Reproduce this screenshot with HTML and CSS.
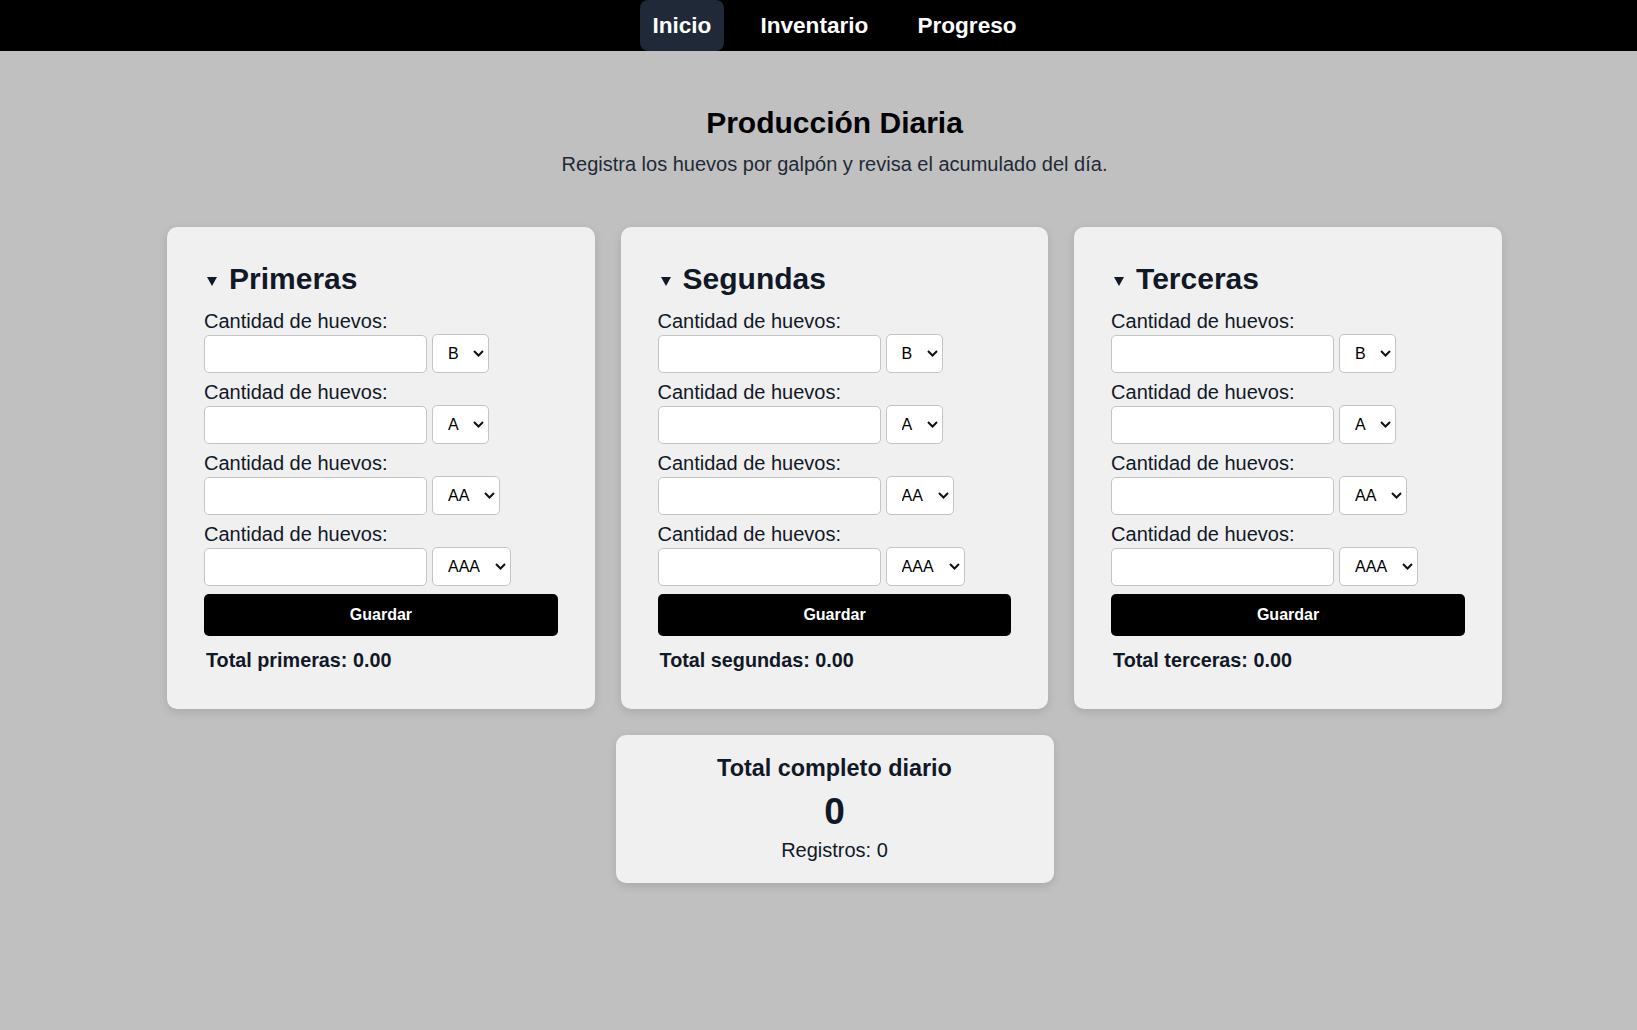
FILE: index.html
```html
<!DOCTYPE html>
<html lang="es">
<head>
<meta charset="utf-8">
<title>Producción Diaria</title>
<link rel="stylesheet" href="styles.css">
</head>
<body>
<nav class="topnav">
  <a class="nav-link active" href="#">Inicio</a>
  <a class="nav-link" href="#">Inventario</a>
  <a class="nav-link" href="#">Progreso</a>
</nav>
<main class="main">
  <header class="page-head">
    <h1 class="page-title">Producción Diaria</h1>
    <p class="page-sub">Registra los huevos por galpón y revisa el acumulado del día.</p>
  </header>
  <section class="cards">
    <div class="card">
      <div class="card-title"><svg class="tri" width="10" height="10" viewBox="0 0 10 10"><polygon points="0,0 10,0 5,9" fill="#111827"/></svg><h2>Primeras</h2></div>
      <div class="row"><label class="lbl">Cantidad de huevos:</label><div class="ctrls"><input class="qty" type="text"><span class="sel-wrap"><select class="sel"><option>B</option></select><svg class="chev" width="11" height="7" viewBox="0 0 11 7"><polyline points="1,1 5.5,5.5 10,1" fill="none" stroke="#111" stroke-width="2"/></svg></span></div></div>
      <div class="row"><label class="lbl">Cantidad de huevos:</label><div class="ctrls"><input class="qty" type="text"><span class="sel-wrap"><select class="sel"><option>A</option></select><svg class="chev" width="11" height="7" viewBox="0 0 11 7"><polyline points="1,1 5.5,5.5 10,1" fill="none" stroke="#111" stroke-width="2"/></svg></span></div></div>
      <div class="row"><label class="lbl">Cantidad de huevos:</label><div class="ctrls"><input class="qty" type="text"><span class="sel-wrap"><select class="sel"><option>AA</option></select><svg class="chev" width="11" height="7" viewBox="0 0 11 7"><polyline points="1,1 5.5,5.5 10,1" fill="none" stroke="#111" stroke-width="2"/></svg></span></div></div>
      <div class="row"><label class="lbl">Cantidad de huevos:</label><div class="ctrls"><input class="qty" type="text"><span class="sel-wrap"><select class="sel"><option>AAA</option></select><svg class="chev" width="11" height="7" viewBox="0 0 11 7"><polyline points="1,1 5.5,5.5 10,1" fill="none" stroke="#111" stroke-width="2"/></svg></span></div></div>
      <button class="save" type="button">Guardar</button>
      <p class="total">Total primeras: 0.00</p>
    </div>
    <div class="card">
      <div class="card-title"><svg class="tri" width="10" height="10" viewBox="0 0 10 10"><polygon points="0,0 10,0 5,9" fill="#111827"/></svg><h2>Segundas</h2></div>
      <div class="row"><label class="lbl">Cantidad de huevos:</label><div class="ctrls"><input class="qty" type="text"><span class="sel-wrap"><select class="sel"><option>B</option></select><svg class="chev" width="11" height="7" viewBox="0 0 11 7"><polyline points="1,1 5.5,5.5 10,1" fill="none" stroke="#111" stroke-width="2"/></svg></span></div></div>
      <div class="row"><label class="lbl">Cantidad de huevos:</label><div class="ctrls"><input class="qty" type="text"><span class="sel-wrap"><select class="sel"><option>A</option></select><svg class="chev" width="11" height="7" viewBox="0 0 11 7"><polyline points="1,1 5.5,5.5 10,1" fill="none" stroke="#111" stroke-width="2"/></svg></span></div></div>
      <div class="row"><label class="lbl">Cantidad de huevos:</label><div class="ctrls"><input class="qty" type="text"><span class="sel-wrap"><select class="sel"><option>AA</option></select><svg class="chev" width="11" height="7" viewBox="0 0 11 7"><polyline points="1,1 5.5,5.5 10,1" fill="none" stroke="#111" stroke-width="2"/></svg></span></div></div>
      <div class="row"><label class="lbl">Cantidad de huevos:</label><div class="ctrls"><input class="qty" type="text"><span class="sel-wrap"><select class="sel"><option>AAA</option></select><svg class="chev" width="11" height="7" viewBox="0 0 11 7"><polyline points="1,1 5.5,5.5 10,1" fill="none" stroke="#111" stroke-width="2"/></svg></span></div></div>
      <button class="save" type="button">Guardar</button>
      <p class="total">Total segundas: 0.00</p>
    </div>
    <div class="card">
      <div class="card-title"><svg class="tri" width="10" height="10" viewBox="0 0 10 10"><polygon points="0,0 10,0 5,9" fill="#111827"/></svg><h2>Terceras</h2></div>
      <div class="row"><label class="lbl">Cantidad de huevos:</label><div class="ctrls"><input class="qty" type="text"><span class="sel-wrap"><select class="sel"><option>B</option></select><svg class="chev" width="11" height="7" viewBox="0 0 11 7"><polyline points="1,1 5.5,5.5 10,1" fill="none" stroke="#111" stroke-width="2"/></svg></span></div></div>
      <div class="row"><label class="lbl">Cantidad de huevos:</label><div class="ctrls"><input class="qty" type="text"><span class="sel-wrap"><select class="sel"><option>A</option></select><svg class="chev" width="11" height="7" viewBox="0 0 11 7"><polyline points="1,1 5.5,5.5 10,1" fill="none" stroke="#111" stroke-width="2"/></svg></span></div></div>
      <div class="row"><label class="lbl">Cantidad de huevos:</label><div class="ctrls"><input class="qty" type="text"><span class="sel-wrap"><select class="sel"><option>AA</option></select><svg class="chev" width="11" height="7" viewBox="0 0 11 7"><polyline points="1,1 5.5,5.5 10,1" fill="none" stroke="#111" stroke-width="2"/></svg></span></div></div>
      <div class="row"><label class="lbl">Cantidad de huevos:</label><div class="ctrls"><input class="qty" type="text"><span class="sel-wrap"><select class="sel"><option>AAA</option></select><svg class="chev" width="11" height="7" viewBox="0 0 11 7"><polyline points="1,1 5.5,5.5 10,1" fill="none" stroke="#111" stroke-width="2"/></svg></span></div></div>
      <button class="save" type="button">Guardar</button>
      <p class="total">Total terceras: 0.00</p>
    </div>
  </section>
  <section class="summary">
    <h3 class="sum-title">Total completo diario</h3>
    <div class="sum-value">0</div>
    <p class="sum-count">Registros: 0</p>
  </section>
</main>
</body>
</html>
```

FILE: styles.css
```css
html, body {
  margin: 0;
  padding: 0;
}
body {
  background: #c0c0c0;
  font-family: "Liberation Sans", Arial, sans-serif;
  font-size: 20px;
  color: #111827;
  min-height: 1030px;
}
.topnav {
  background: #000;
  height: 51px;
  display: flex;
  justify-content: center;
  align-items: stretch;
  gap: 24px;
  padding-left: 32px;
}
.nav-link {
  display: flex;
  align-items: center;
  padding: 0 12.5px;
  color: #fff;
  font-weight: bold;
  font-size: 22.6px;
  text-decoration: none;
  border-radius: 8px;
}
.nav-link.active {
  background: #1f2937;
}
.main {
  padding-left: 32px;
}
.page-head {
  text-align: center;
  padding-top: 55px;
}
.page-title {
  margin: 0;
  font-size: 30px;
  line-height: 34.5px;
  color: #000;
}
.page-sub {
  margin: 12px 0 0;
  font-size: 20px;
  line-height: 23px;
  color: #1f2937;
}
.cards {
  max-width: 1335px;
  margin: 51px auto 0;
  display: grid;
  grid-template-columns: repeat(3, 1fr);
  gap: 25.6px;
}
.card {
  background: #f0f0f0;
  border-radius: 10px;
  padding: 35px 37px 37px;
  box-shadow: 0 3px 10px rgba(0, 0, 0, 0.12);
}
.card-title {
  display: flex;
  align-items: center;
  margin-bottom: 14px;
}
.tri {
  margin: 6px 12px 0 3px;
  flex: none;
}
.card-title h2 {
  margin: 0;
  font-size: 30px;
  line-height: 34.5px;
  color: #111827;
}
.row {
  margin-bottom: 8px;
}
.lbl {
  display: block;
  font-size: 20px;
  line-height: 23px;
  margin-bottom: 1px;
  color: #111827;
}
.ctrls {
  display: flex;
  align-items: flex-end;
  gap: 5px;
}
.qty {
  box-sizing: border-box;
  width: 223px;
  height: 38px;
  border: 1px solid #c4c4c4;
  border-radius: 5px;
  background: #fff;
  padding: 0 8px;
  font-size: 16px;
  font-family: inherit;
  margin: 0;
}
.sel-wrap {
  position: relative;
  display: inline-flex;
}
.sel {
  -webkit-appearance: none;
  appearance: none;
  box-sizing: border-box;
  height: 39px;
  padding: 0 29px 0 15px;
  border: 1px solid #c4c4c4;
  border-radius: 5px;
  background: #fff;
  color: #000;
  font-family: "Liberation Sans", Arial, sans-serif;
  font-size: 16px;
  margin: 0;
}
.chev {
  position: absolute;
  right: 5px;
  top: 16px;
  pointer-events: none;
}
.save {
  display: block;
  width: 100%;
  height: 42px;
  margin-top: 1px;
  background: #000;
  color: #fff;
  border: none;
  border-radius: 5px;
  font-family: "Liberation Sans", Arial, sans-serif;
  font-weight: bold;
  font-size: 16px;
}
.total {
  margin: 13px 0 0;
  padding-left: 2px;
  font-weight: bold;
  font-size: 19.8px;
  line-height: 23px;
  color: #111827;
}
.summary {
  width: 438px;
  box-sizing: border-box;
  margin: 25.6px auto 0;
  background: #f0f0f0;
  border-radius: 10px;
  padding: 20px 20px 21px;
  text-align: center;
  box-shadow: 0 3px 10px rgba(0, 0, 0, 0.12);
}
.sum-title {
  margin: 0 0 9px;
  font-size: 23.4px;
  line-height: 27px;
  color: #111827;
}
.sum-value {
  font-size: 37px;
  line-height: 41.5px;
  font-weight: bold;
  margin-bottom: 7px;
  color: #111827;
}
.sum-count {
  margin: 0;
  font-size: 20px;
  line-height: 23px;
  color: #111827;
}
```
